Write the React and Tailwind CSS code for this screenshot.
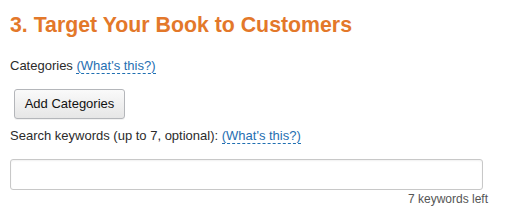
const WhatsThis = () => (
  <a
    href="#"
    className="text-[#1f6fb2] border-b border-dashed border-[#1f6fb2] no-underline"
  >
    (What's this?)
  </a>
);

const App = () => {
  return (
    <div className="bg-white min-h-screen px-[10px] pt-[12px] font-['Liberation_Sans',Arial,sans-serif] text-[#2b2b2b]">
      <h1 className="text-[21.3px] leading-[26px] font-bold text-[#e3782a]">
        3. Target Your Book to Customers
      </h1>

      <p className="mt-[20px] text-[13px] leading-[16px]">
        Categories <WhatsThis />
      </p>

      <button className="mt-[15px] ml-[4px] w-[111px] h-[30px] rounded-[3px] border border-[#b4b6ba] bg-gradient-to-b from-[#fafafa] to-[#e6e6e6] text-[13px] text-[#111] shadow-[0_1px_0_rgba(0,0,0,0.05)]">
        Add Categories
      </button>

      <p className="mt-[9px] text-[13px] leading-[16px]">
        Search keywords (up to 7, optional): <WhatsThis />
      </p>

      <input
        type="text"
        className="block mt-[15px] w-[473px] h-[31px] rounded-[3px] border border-[#c8c8c8] bg-white outline-none shadow-[inset_0_1px_2px_rgba(0,0,0,0.06)]"
      />

      <div className="mt-[2px] w-[478px] text-right text-[12px] leading-[15px] text-[#555]">
        7 keywords left
      </div>
    </div>
  );
};

export default App;
